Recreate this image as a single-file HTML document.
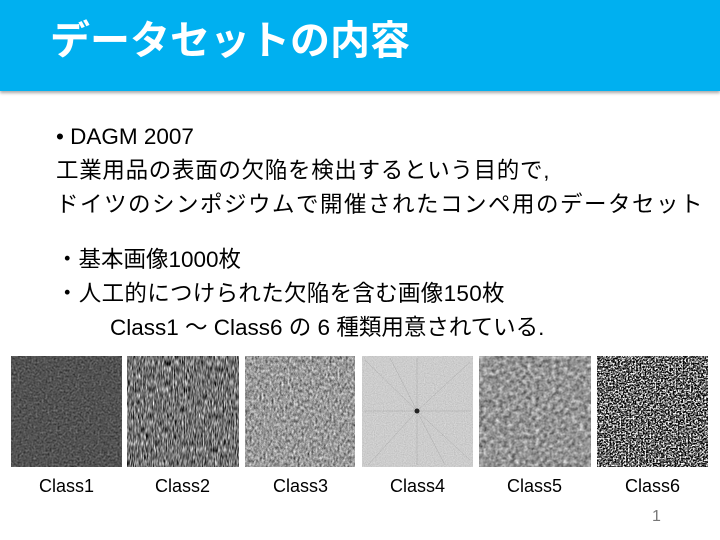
<!DOCTYPE html>
<html><head><meta charset="utf-8"><style>
body{margin:0;width:720px;height:540px;background:#fff;position:relative;overflow:hidden;font-family:"Liberation Sans","Noto Sans CJK JP",sans-serif;color:#000}
.hd{position:absolute;left:0;top:0;width:720px;height:91px;background:#00b0f0;box-shadow:0 2px 3px rgba(0,0,0,.35)}
.hd h1{position:absolute;left:50px;top:15px;margin:0;font-size:40px;font-weight:bold;color:#fff;line-height:52px}
.t{position:absolute;left:56px;font-size:22.5px;line-height:26px;white-space:nowrap;letter-spacing:1.3px}
.lb{position:absolute;top:476px;width:111px;text-align:center;font-size:18px}
</style></head><body>
<div class="hd"><h1>データセットの内容</h1></div>
<div class="t" style="top:124px;letter-spacing:0">• DAGM 2007</div>
<div class="t" style="top:158px;letter-spacing:0.7px">工業用品の表面の欠陥を検出するという目的で,</div>
<div class="t" style="top:192px;letter-spacing:1.5px">ドイツのシンポジウムで開催されたコンペ用のデータセット</div>
<div class="t" style="top:247px;letter-spacing:0">・基本画像1000枚</div>
<div class="t" style="top:281px;letter-spacing:0.3px">・人工的につけられた欠陥を含む画像150枚</div>
<div class="t" style="top:315px;left:110px;letter-spacing:0">Class1 ～ Class6 の 6 種類用意されている.</div>
<svg width="720" height="540" style="position:absolute;left:0;top:0">
<defs>
<filter id="f1" x="0" y="0" width="1" height="1" color-interpolation-filters="sRGB"><feTurbulence type="fractalNoise" baseFrequency="0.5" numOctaves="2" seed="1"/><feColorMatrix type="matrix" values="0.3 0.3 0 0 0.02 0.3 0.3 0 0 0.02 0.3 0.3 0 0 0.02 0 0 0 0 1"/></filter>
<filter id="f2" x="0" y="0" width="1" height="1" color-interpolation-filters="sRGB"><feTurbulence type="fractalNoise" baseFrequency="0.9 0.15" numOctaves="2" seed="3"/><feColorMatrix type="matrix" values="1 1 0 0 -0.55 1 1 0 0 -0.55 1 1 0 0 -0.55 0 0 0 0 1"/></filter>
<filter id="f3" x="0" y="0" width="1" height="1" color-interpolation-filters="sRGB"><feTurbulence type="fractalNoise" baseFrequency="0.5 0.3" numOctaves="3" seed="5"/><feColorMatrix type="matrix" values="0.6 0.6 0 0 0 0.6 0.6 0 0 0 0.6 0.6 0 0 0 0 0 0 0 1"/></filter>
<filter id="f4" x="0" y="0" width="1" height="1" color-interpolation-filters="sRGB"><feTurbulence type="fractalNoise" baseFrequency="0.9" numOctaves="1" seed="7"/><feColorMatrix type="matrix" values="0.15 0.15 0 0 0.65 0.15 0.15 0 0 0.65 0.15 0.15 0 0 0.65 0 0 0 0 1"/></filter>
<filter id="f5" x="0" y="0" width="1" height="1" color-interpolation-filters="sRGB"><feTurbulence type="fractalNoise" baseFrequency="0.25" numOctaves="3" seed="9"/><feColorMatrix type="matrix" values="0.5 0.5 0 0 0.08 0.5 0.5 0 0 0.08 0.5 0.5 0 0 0.08 0 0 0 0 1"/></filter>
<filter id="f6" x="0" y="0" width="1" height="1" color-interpolation-filters="sRGB"><feTurbulence type="fractalNoise" baseFrequency="0.6" numOctaves="2" seed="11"/><feColorMatrix type="matrix" values="2.5 2.5 0 0 -2.1 2.5 2.5 0 0 -2.1 2.5 2.5 0 0 -2.1 0 0 0 0 1"/></filter>
</defs>
<rect x="11" y="356" width="111" height="111" filter="url(#f1)"/>
<rect x="127" y="356" width="112" height="111" filter="url(#f2)"/>
<rect x="245" y="356" width="110" height="111" filter="url(#f3)"/>
<rect x="362" y="356" width="111" height="111" filter="url(#f4)"/>
<g stroke="#777" stroke-width="0.4" opacity="0.5">
<line x1="417" y1="411" x2="365" y2="360"/><line x1="417" y1="411" x2="470" y2="362"/><line x1="417" y1="411" x2="368" y2="465"/><line x1="417" y1="411" x2="470" y2="460"/><line x1="417" y1="411" x2="417" y2="358"/><line x1="417" y1="411" x2="417" y2="465"/><line x1="417" y1="411" x2="364" y2="411"/><line x1="417" y1="411" x2="471" y2="411"/><line x1="417" y1="411" x2="390" y2="358"/><line x1="417" y1="411" x2="445" y2="465"/></g>
<circle cx="417" cy="411" r="2.5" fill="#222"/>
<rect x="479" y="356" width="112" height="111" filter="url(#f5)"/>
<rect x="597" y="356" width="111" height="111" filter="url(#f6)"/>
</svg>
<div class="lb" style="left:11px">Class1</div>
<div class="lb" style="left:127px">Class2</div>
<div class="lb" style="left:245px">Class3</div>
<div class="lb" style="left:362px">Class4</div>
<div class="lb" style="left:479px">Class5</div>
<div class="lb" style="left:597px">Class6</div>
<div style="position:absolute;left:652px;top:508px;font-size:16px;color:#777">1</div>
</body></html>
